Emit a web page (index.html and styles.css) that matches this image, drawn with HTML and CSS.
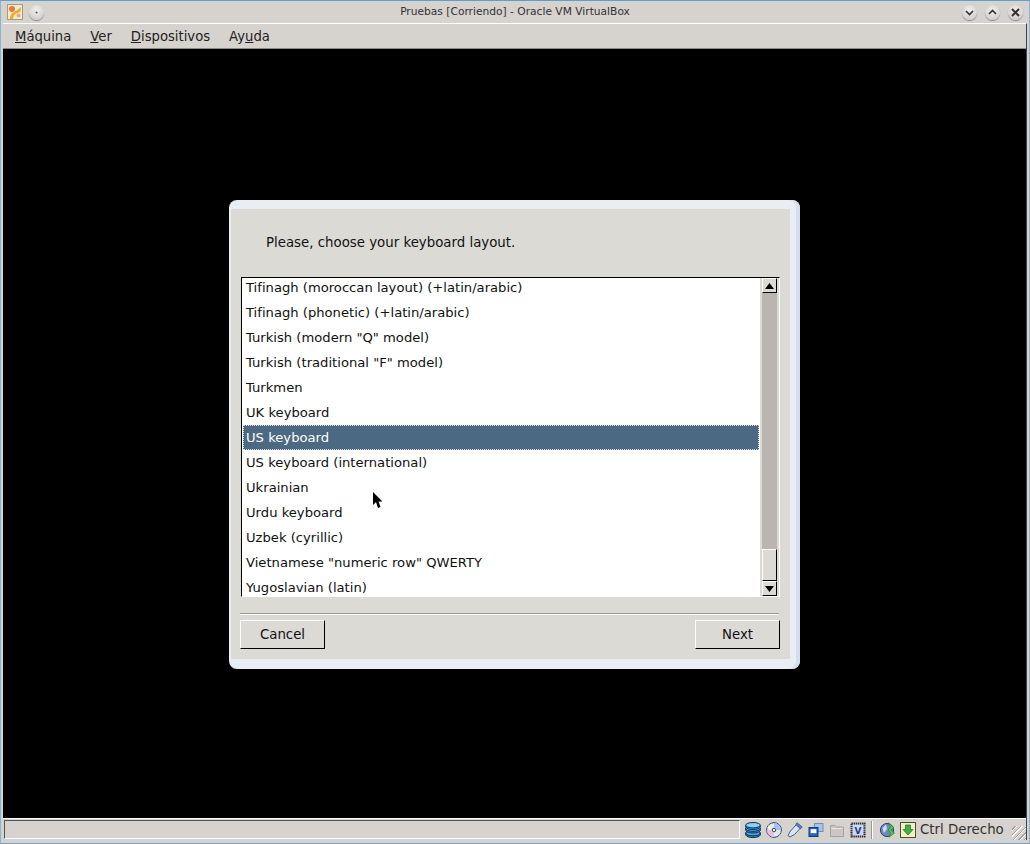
FILE: index.html
```html
<!DOCTYPE html>
<html lang="es">
<head>
<meta charset="utf-8">
<title>Pruebas [Corriendo] - Oracle VM VirtualBox</title>
<link rel="stylesheet" href="styles.css">
</head>
<body>
<div class="window">
  <header class="titlebar">
    <div class="tb-left">
      <svg class="app-icon" width="16" height="16" viewBox="0 0 16 16"><rect x=".5" y=".5" width="15" height="15" fill="#f1ead8" stroke="#a89a80"/><path d="M3 15 C3 10 6 8 9 7 L14 3 L13.5 7.5 L8.5 10 C6.5 11 6.5 13 6 15Z" fill="#f2ad1e"/><circle cx="5" cy="5" r="3" fill="#e87a3a"/><circle cx="11.5" cy="11.5" r="2" fill="#eaa77c"/></svg>
      <span class="tb-btn"><svg width="15" height="15" viewBox="0 0 15 15"><circle cx="7.5" cy="7.5" r="1" fill="#555"/></svg></span>
    </div>
    <div class="tb-title">Pruebas [Corriendo] - Oracle VM VirtualBox</div>
    <div class="tb-right">
      <span class="tb-btn"><svg width="15" height="15" viewBox="0 0 15 15"><path d="M4 6 L7.5 9.5 L11 6" fill="none" stroke="#333" stroke-width="1.6"/></svg></span>
      <span class="tb-btn"><svg width="15" height="15" viewBox="0 0 15 15"><path d="M4 9 L7.5 5.5 L11 9" fill="none" stroke="#333" stroke-width="1.6"/></svg></span>
      <span class="tb-btn"><svg width="15" height="15" viewBox="0 0 15 15"><path d="M4 4 L11 11 M11 4 L4 11" fill="none" stroke="#333" stroke-width="2"/></svg></span>
    </div>
  </header>
  <div class="client">
    <nav class="menubar">
      <span class="menu"><u>M</u>áquina</span>
      <span class="menu"><u>V</u>er</span>
      <span class="menu"><u>D</u>ispositivos</span>
      <span class="menu">Ay<u>u</u>da</span>
    </nav>
    <main class="screen">
      <section class="dialog">
        <div class="dialog-inner">
          <p class="prompt">Please, choose your keyboard layout.</p>
          <div class="listbox">
            <ul class="list">
              <li>Tifinagh (moroccan layout) (+latin/arabic)</li>
              <li>Tifinagh (phonetic) (+latin/arabic)</li>
              <li>Turkish (modern "Q" model)</li>
              <li>Turkish (traditional "F" model)</li>
              <li>Turkmen</li>
              <li>UK keyboard</li>
              <li class="selected">US keyboard</li>
              <li>US keyboard (international)</li>
              <li>Ukrainian</li>
              <li>Urdu keyboard</li>
              <li>Uzbek (cyrillic)</li>
              <li>Vietnamese "numeric row" QWERTY</li>
              <li>Yugoslavian (latin)</li>
            </ul>
            <div class="scrollbar">
              <span class="sb-btn"><svg width="9" height="6" viewBox="0 0 9 6"><path d="M4.5 0 L9 6 H0Z" fill="#000"/></svg></span>
              <div class="sb-track"><span class="sb-thumb"></span></div>
              <span class="sb-btn"><svg width="9" height="6" viewBox="0 0 9 6"><path d="M0 0 H9 L4.5 6Z" fill="#000"/></svg></span>
            </div>
          </div>
          <hr class="sep">
          <div class="actions">
            <button class="btn">Cancel</button>
            <button class="btn">Next</button>
          </div>
        </div>
      </section>
      <svg class="cursor" width="10" height="17" viewBox="0 0 10 17"><path d="M0 0 L0 13 L3 10 L5 16 L7.5 15 L5.5 9.5 L9.5 9.5Z" fill="#000"/></svg>
    </main>
    <footer class="statusbar">
      <div class="status-field"></div>
      <svg class="si" width="16" height="16" viewBox="0 0 16 16"><path d="M.7 11 V13 C2 16.4 14 16.4 15.3 13 V11Z" fill="#2f86c8" stroke="#0b3157"/><ellipse cx="8" cy="11" rx="7.3" ry="2.8" fill="#4fa6e0" stroke="#0b3157"/><path d="M.7 6.5 V8.5 C2 11.9 14 11.9 15.3 8.5 V6.5Z" fill="#2f86c8" stroke="#0b3157"/><ellipse cx="8" cy="6.5" rx="7.3" ry="2.8" fill="#62b6ea" stroke="#0b3157"/><path d="M.7 3.5 V5 C2 8.4 14 8.4 15.3 5 V3.5Z" fill="#3f95d4" stroke="#0b3157"/><ellipse cx="8" cy="3.2" rx="7.3" ry="2.7" fill="#8ed0f4" stroke="#0b3157"/></svg>
      <svg class="si" width="16" height="16" viewBox="0 0 16 16"><circle cx="8" cy="8" r="7.4" fill="#e4e9f4" stroke="#2a4470"/><path d="M8 1 A7 7 0 0 1 15 8 H10.4 A2.4 2.4 0 0 0 8 5.6Z" fill="#a9c0ee"/><path d="M8 15 A7 7 0 0 1 1 8 H5.6 A2.4 2.4 0 0 0 8 10.4Z" fill="#f0bedc"/><path d="M1.4 6 L5.8 7 L3 2.8Z" fill="#f6f3c6"/><path d="M14.6 10 L10.2 9 L13 13.2Z" fill="#c6efd6"/><circle cx="8" cy="8" r="1.8" fill="#fff" stroke="#2a4470"/></svg>
      <svg class="si" width="16" height="16" viewBox="0 0 16 16"><path d="M9.5 2.5 L13.5 6 L7.5 12.5 L3 15 L1 13.5 L3.5 9Z" fill="#dbe4f4" stroke="#3c5f98"/><path d="M10 .8 L15.2 5 L13.5 6.8 L8.8 2.6Z" fill="#5f84c0" stroke="#3c5f98"/></svg>
      <svg class="si" width="16" height="16" viewBox="0 0 16 16"><rect x="6.5" y="1.5" width="8.5" height="8" fill="#a9c3e8" stroke="#6b8fc2"/><rect x="1" y="5.5" width="9" height="9" fill="#1f66bd" stroke="#0e3c78"/><rect x="2.6" y="7.2" width="5.8" height="4" fill="#fff"/></svg>
      <svg class="si" width="16" height="16" viewBox="0 0 16 16"><path d="M1.5 3.5 H6 L7.5 5 H14.5 V14.5 H1.5Z" fill="#cac8c4" stroke="#a5a39f"/><path d="M2.5 6.5 H13.5" stroke="#e6e4e0"/></svg>
      <svg class="si" width="16" height="16" viewBox="0 0 16 16"><rect x="1.5" y="1.5" width="13" height="13" fill="#c7d3ee" stroke="#2c2f38" stroke-width="2" stroke-dasharray="1.4 .7"/><rect x="3" y="3" width="10" height="10" fill="#cdd8f2"/><text x="8" y="12" font-family="DejaVu Sans" font-size="9" font-weight="bold" text-anchor="middle" fill="#28407e">V</text></svg>
      <span class="status-sep"></span>
      <svg class="si si-globe" width="16" height="16" viewBox="0 0 16 16"><circle cx="7" cy="8" r="6.6" fill="#6d89c2" stroke="#2b4279"/><path d="M2.5 6 L6 2.5 L7 7 L4 11Z" fill="#d3dcf0"/><path d="M8.5 .8 L14 5.5 L11 8 L14.6 11 L9 15.2 L10.6 11.2 L8.2 8 L10.5 5Z" fill="#56c44a" stroke="#1d7a20" stroke-width=".6"/></svg>
      <svg class="si" width="16" height="16" viewBox="0 0 16 16"><rect x=".5" y=".5" width="15" height="15" fill="#f3edc8" stroke="#4e4b37"/><path d="M5.5 3 H10.5 V7.5 H13 L8 13 L3 7.5 H5.5Z" fill="#3cb43c" stroke="#1d6a1d" stroke-width=".7"/></svg>
      <span class="host-key">Ctrl Derecho</span>
      <span class="grip"></span>
    </footer>
  </div>
</div>
</body>
</html>
```

FILE: styles.css
```css
* { box-sizing: border-box; }
html, body { margin: 0; padding: 0; height: 100%; }
body { width: 1030px; height: 844px; overflow: hidden; font-family: "DejaVu Sans", sans-serif; font-size: 13.33px; color: #111; background: #d6d2ce; }
.window { width: 1030px; height: 844px; display: flex; flex-direction: column; background: #d6d2ce; border-top: 1px solid #5f9fd0; border-left: 1px solid #8ab4d6; border-right: 1px solid #8ab4d6; border-bottom: 1px solid #6ea3cc; padding-bottom: 3px; }
.titlebar { height: 22px; flex: none; display: flex; align-items: center; justify-content: space-between; position: relative; padding: 0 6px 0 6px; }
.tb-left, .tb-right { display: flex; align-items: center; gap: 6px; }
.tb-right { gap: 8px; }
.app-icon { display: block; }
.tb-btn { width: 15px; height: 15px; border-radius: 50%; background: radial-gradient(circle at 50% 35%, #f2f0ee, #cfccc9 80%); box-shadow: 0 1px 1px #888; display: block; }
.tb-btn svg { display: block; }
.tb-title { position: absolute; left: 0; right: 0; top: 3px; text-align: center; font-size: 10.67px; color: #333; line-height: 15px; }
.client { flex: 1; display: flex; flex-direction: column; margin: 0 2px; border-top: 1px solid #fff; border-right: 1px solid #444; min-height: 0; }
.menubar { height: 25px; flex: none; display: flex; align-items: center; gap: 19px; padding: 1px 12px 0; background: #d6d2ce; border-bottom: 1px solid #8c8985; color: #222; font-size: 13.2px; }
.menu { line-height: 24px; }
.screen { flex: 1; min-height: 0; background: #000; position: relative; display: flex; justify-content: flex-start; align-items: flex-start; padding: 151px 0 0 226px; }
.dialog { width: 571px; height: 469px; border-radius: 8px; background: #e9eef5; padding: 9px 10px 10px 2px; box-shadow: inset -4px 0 0 #d3dfee; }
.dialog-inner { height: 450px; background: #dcdad5; padding: 0 10px 0 9px; display: flex; flex-direction: column; }
.prompt { margin: 0; padding: 26px 0 0 26px; height: 68px; line-height: 16px; color: #111; }
.listbox { height: 320px; margin-left: 1px; border: 1px solid #000; border-right-color: #fff; border-bottom-color: #fff; display: flex; overflow: hidden; background: #dcdad5; }
.list { list-style: none; margin: 0; padding: 0 1px 0 1px; flex: 1; min-width: 0; height: 318px; background: #fff; overflow: hidden; font-size: 13.15px; }
.list li { height: 25px; line-height: 25px; padding-left: 3px; color: #111; white-space: nowrap; }
.list li:first-child { margin-top: -3px; }
.list .selected { background: #4b6983; color: #fff; outline: 1px dotted #dcdad5; outline-offset: -1px; }
.scrollbar { width: 19px; flex: none; display: flex; flex-direction: column; padding: 0 2px 0 2px; background: #dcdad5; }
.sb-btn { height: 15px; width: 15px; flex: none; background: #dcdad5; border: 1px solid #000; border-top-color: #fff; border-left-color: #fff; display: flex; align-items: center; justify-content: center; }
.sb-track { flex: 1; background: #b9b6b1; display: flex; flex-direction: column; justify-content: flex-end; width: 15px; }
.sb-thumb { display: block; height: 32px; background: #dcdad5; border: 1px solid #000; border-top-color: #fff; border-left-color: #fff; }
.sep { border: 0; border-top: 1px solid #9a9893; border-bottom: 1px solid #fff; height: 2px; margin: 16px 1px 5px 0; }
.actions { display: flex; justify-content: space-between; }
.btn { width: 85px; height: 29px; padding: 0; background: #dcdad5; border: 1px solid #000; border-top-color: #fff; border-left-color: #fff; font: inherit; color: #111; }
.cursor { position: absolute; left: 370px; top: 443px; }
.statusbar { height: 22px; flex: none; display: flex; align-items: center; padding: 0 0 0 1px; background: #d6d2ce; gap: 5px; border-top: 1px solid #fff; color: #333; }
.status-field { width: 736px; height: 19px; border: 1px solid #8c8985; border-bottom-color: #fff; border-right-color: #fff; border-top-color: #555; border-left-color: #555; }
.si { flex: none; display: block; }
.si-globe { margin-right: -1px; }
.status-sep { width: 2px; height: 18px; margin-right: 2px; background: linear-gradient(90deg, #9a9792 50%, #fff 50%); flex: none; }
.host-key { color: #333; white-space: nowrap; margin-left: -1px; }
.grip { width: 14px; height: 14px; flex: none; margin-left: auto; align-self: flex-end; background: repeating-linear-gradient(135deg, transparent 0 2px, #a5a29e 2px 3px, #fff 3px 4px); }
```
